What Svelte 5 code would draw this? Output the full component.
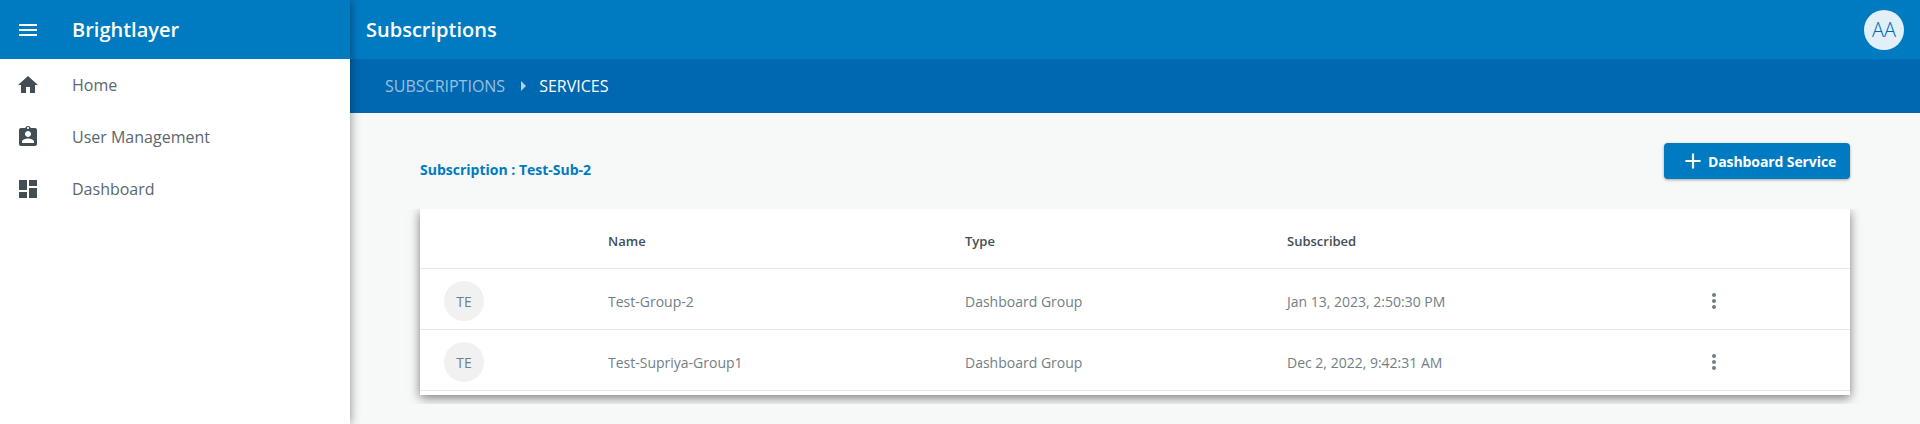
<script>
  const nav = [
    { label: 'Home', d: 'M10 20v-6h4v6h5v-8h3L12 3 2 12h3v8z' },
    { label: 'User Management', d: 'M19 3h-4.18C14.4 1.84 13.3 1 12 1c-1.3 0-2.4.84-2.82 2H5c-1.1 0-2 .9-2 2v14c0 1.1.9 2 2 2h14c1.1 0 2-.9 2-2V5c0-1.1-.9-2-2-2zm-7-1c.55 0 1 .45 1 1s-.45 1-1 1-1-.45-1-1 .45-1 1-1zm0 4c1.66 0 3 1.34 3 3s-1.34 3-3 3-3-1.34-3-3 1.34-3 3-3zm6 12H6v-1.4c0-2 4-3.1 6-3.1s6 1.1 6 3.1V18z' },
    { label: 'Dashboard', d: 'M3 13h8V3H3v10zm0 8h8v-6H3v6zm10 0h8V11h-8v10zm0-18v6h8V3h-8z' }
  ];
  const rows = [
    { name: 'Test-Group-2', type: 'Dashboard Group', date: 'Jan 13, 2023, 2:50:30 PM' },
    { name: 'Test-Supriya-Group1', type: 'Dashboard Group', date: 'Dec 2, 2022, 9:42:31 AM' }
  ];
</script>

<div class="app">
  <aside class="sidebar">
    <div class="brand">
      <svg class="icon" viewBox="0 0 24 24"><path d="M3 18h18v-2H3v2zm0-5h18v-2H3v2zm0-7v2h18V6H3z" /></svg>
      <span class="brand-name">Brightlayer</span>
    </div>
    <nav>
      {#each nav as item}
        <div class="nav-item">
          <svg class="icon" viewBox="0 0 24 24"><path d={item.d} /></svg>
          <span>{item.label}</span>
        </div>
      {/each}
    </nav>
  </aside>

  <main class="main">
    <header class="topbar">
      <h1>Subscriptions</h1>
      <div class="avatar">AA</div>
    </header>
    <div class="crumbs">
      <span class="crumb-link">Subscriptions</span>
      <svg class="caret" viewBox="0 0 24 24"><path d="M10 17l5-5-5-5v10z" /></svg>
      <span class="crumb-now">Services</span>
    </div>
    <section class="content">
      <div class="toolbar">
        <div class="sub-title">Subscription : Test-Sub-2</div>
        <button class="add">
          <svg viewBox="0 0 24 24"><path d="M19 13h-6v6h-2v-6H5v-2h6V5h2v6h6v2z" /></svg>
          Dashboard Service
        </button>
      </div>
      <div class="clip">
        <div class="card">
          <div class="row head">
            <span></span><span>Name</span><span>Type</span><span>Subscribed</span><span></span>
          </div>
          {#each rows as r}
            <div class="row">
              <span class="badge">TE</span>
              <span>{r.name}</span>
              <span>{r.type}</span>
              <span>{r.date}</span>
              <svg class="more" viewBox="0 0 24 24"><path d="M12 8c1.1 0 2-.9 2-2s-.9-2-2-2-2 .9-2 2 .9 2 2 2zm0 2c-1.1 0-2 .9-2 2s.9 2 2 2 2-.9 2-2-.9-2-2-2zm0 6c-1.1 0-2 .9-2 2s.9 2 2 2 2-.9 2-2-.9-2-2-2z" /></svg>
            </div>
          {/each}
        </div>
      </div>
    </section>
  </main>
</div>

<style>
  :global(body) {
    margin: 0;
    background: #f7f8f8;
    font-family: "Open Sans", sans-serif;
  }
  .app {
    display: flex;
    height: 424px;
    overflow: hidden;
  }
  .sidebar {
    width: 350px;
    flex: none;
    background: #fff;
    position: relative;
    z-index: 2;
    box-shadow: 0 0 10px rgba(0, 0, 0, 0.45);
  }
  .icon {
    width: 24px;
    height: 24px;
    flex: none;
    margin-right: 32px;
    fill: #424e54;
  }
  .brand {
    height: 59px;
    display: flex;
    align-items: center;
    padding-left: 16px;
    background: #007bc1;
    color: #fff;
  }
  .brand .icon {
    fill: #fff;
  }
  .brand-name {
    font-size: 20px;
    font-weight: 600;
  }
  .nav-item {
    height: 52px;
    display: flex;
    align-items: center;
    padding-left: 16px;
    font-size: 16px;
    color: #5b676d;
  }
  .main {
    flex: 1;
    min-width: 0;
    display: flex;
    flex-direction: column;
  }
  .topbar {
    height: 59px;
    background: #007bc1;
    display: flex;
    align-items: center;
    justify-content: space-between;
    padding: 0 16px;
    color: #fff;
  }
  h1 {
    margin: 0;
    font-size: 20px;
    font-weight: 600;
  }
  .avatar {
    width: 40px;
    height: 40px;
    border-radius: 50%;
    background: #e0eff8;
    color: #0069b5;
    display: flex;
    align-items: center;
    justify-content: center;
    font-size: 20px;
    font-weight: 300;
  }
  .crumbs {
    height: 54px;
    background: #0067b1;
    display: flex;
    align-items: center;
    padding-left: 35px;
    font-size: 16px;
    text-transform: uppercase;
  }
  .crumb-link {
    color: rgba(255, 255, 255, 0.6);
  }
  .crumb-now {
    color: #fff;
  }
  .caret {
    width: 24px;
    height: 24px;
    margin: 0 4px 0 6px;
    fill: rgba(255, 255, 255, 0.7);
  }
  .content {
    flex: 1;
    padding: 30px 0 0;
  }
  .toolbar {
    display: flex;
    justify-content: space-between;
    align-items: flex-end;
    padding: 0 70px;
  }
  .sub-title {
    font-size: 14px;
    font-weight: 700;
    line-height: 19px;
    color: #007bc1;
  }
  .add {
    height: 36px;
    width: 186px;
    padding: 0 0 0 16px;
    border: 0;
    border-radius: 4px;
    background: #007bc1;
    color: #fff;
    font: 700 14px "Open Sans", sans-serif;
    letter-spacing: -0.1px;
    display: flex;
    align-items: center;
    box-shadow: 0 1px 3px rgba(0, 0, 0, 0.35);
  }
  .add svg {
    width: 26px;
    height: 26px;
    fill: #fff;
    margin-right: 2px;
  }
  .clip {
    margin-top: 30px;
    overflow: hidden;
    padding: 0 70px 9px;
  }
  .card {
    background: #fff;
    padding-bottom: 4px;
    box-shadow: 0 3px 10px rgba(0, 0, 0, 0.5);
  }
  .row {
    display: grid;
    grid-template-columns: 188px 357px 322px 415px 1fr;
    align-items: center;
    height: 56px;
    padding-top: 4px;
    border-bottom: 1px solid #e6e8e9;
    font-size: 14px;
    color: #727e84;
  }
  .head {
    height: 55px;
    font-size: 13px;
    font-weight: 600;
    color: #424e54;
  }
  .badge {
    margin-left: 24px;
    width: 40px;
    height: 40px;
    border-radius: 50%;
    background: #f1f1f2;
    display: flex;
    align-items: center;
    justify-content: center;
  }
  .more {
    width: 24px;
    height: 24px;
    fill: #727e84;
  }
</style>
